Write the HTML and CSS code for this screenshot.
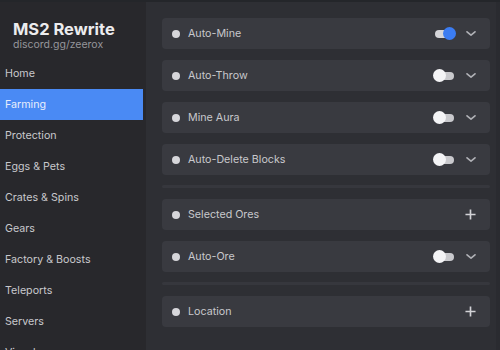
FILE: index.html
```html
<!DOCTYPE html>
<html lang="en">

<head>
    <meta charset="UTF-8">
    <meta name="viewport" content="width=device-width, initial-scale=1.0">
    <title>MS2 Rewrite</title>
    <link rel="stylesheet" href="styles.css">
</head>

<body>
    <div class="window">
        <aside class="sidebar">
            <div class="brand">
                <h1>MS2 Rewrite</h1>
                <p>discord.gg/zeerox</p>
            </div>
            <nav class="tabs">
                <div class="tab">Home</div>
                <div class="tab active">Farming</div>
                <div class="tab">Protection</div>
                <div class="tab">Eggs &amp; Pets</div>
                <div class="tab">Crates &amp; Spins</div>
                <div class="tab">Gears</div>
                <div class="tab">Factory &amp; Boosts</div>
                <div class="tab">Teleports</div>
                <div class="tab">Servers</div>
                <div class="tab">Visuals</div>
            </nav>
        </aside>

        <main class="content">
            <div class="row">
                <span class="dot"></span>
                <span class="label">Auto-Mine</span>
                <span class="toggle on"><span class="knob"></span></span>
                <svg class="chev" viewBox="0 0 10 5"><path d="M1 0.8 L5 4.2 L9 0.8" /></svg>
            </div>
            <div class="row">
                <span class="dot"></span>
                <span class="label">Auto-Throw</span>
                <span class="toggle"><span class="knob"></span></span>
                <svg class="chev" viewBox="0 0 10 5"><path d="M1 0.8 L5 4.2 L9 0.8" /></svg>
            </div>
            <div class="row">
                <span class="dot"></span>
                <span class="label">Mine Aura</span>
                <span class="toggle"><span class="knob"></span></span>
                <svg class="chev" viewBox="0 0 10 5"><path d="M1 0.8 L5 4.2 L9 0.8" /></svg>
            </div>
            <div class="row">
                <span class="dot"></span>
                <span class="label">Auto-Delete Blocks</span>
                <span class="toggle"><span class="knob"></span></span>
                <svg class="chev" viewBox="0 0 10 5"><path d="M1 0.8 L5 4.2 L9 0.8" /></svg>
            </div>
            <div class="divider"></div>
            <div class="row">
                <span class="dot"></span>
                <span class="label">Selected Ores</span>
                <svg class="plus" viewBox="0 0 12 12"><path d="M6 0.5 V11.5 M0.5 6 H11.5" /></svg>
            </div>
            <div class="row">
                <span class="dot"></span>
                <span class="label">Auto-Ore</span>
                <span class="toggle"><span class="knob"></span></span>
                <svg class="chev" viewBox="0 0 10 5"><path d="M1 0.8 L5 4.2 L9 0.8" /></svg>
            </div>
            <div class="divider"></div>
            <div class="row">
                <span class="dot"></span>
                <span class="label">Location</span>
                <svg class="plus" viewBox="0 0 12 12"><path d="M6 0.5 V11.5 M0.5 6 H11.5" /></svg>
            </div>
        </main>
        <div class="scrollbar"></div>
    </div>
</body>

</html>
```

FILE: styles.css
```css
:root {
    --sidebar: #28282c;
    --background: #2e2f34;
    --card: #393a40;
    --accent: #4a8af4;
    --text: #c8c8cc;
    --muted: #96969b;
}

html,
body {
    margin: 0;
    height: 100%;
    overflow: hidden;
}

body {
    background-color: var(--background);
    font-family: Inter, "Noto Sans", sans-serif;
    color: var(--text);
}

.window {
    display: flex;
    height: 350px;
    border-top: 2px solid #24262a;
    box-sizing: border-box;
}

.sidebar {
    width: 146px;
    flex: none;
    background-color: var(--sidebar);
}

.brand {
    padding: 17px 0 0 13px;
    height: 39px;
}

.brand h1 {
    margin: 0;
    font-size: 16.5px;
    font-weight: 700;
    line-height: 20px;
    color: #ececee;
}

.brand p {
    margin: 0;
    font-size: 10.5px;
    line-height: 12px;
    color: var(--muted);
}

.tabs {
    display: flex;
    flex-direction: column;
}

.tab {
    height: 31px;
    line-height: 31px;
    padding-left: 5px;
    margin-right: 3px;
    font-size: 10.7px;
}

.tab.active {
    background-color: var(--accent);
    color: #e8eefc;
}

.content {
    flex: 1;
    display: flex;
    flex-direction: column;
    gap: 11px;
    padding: 16px 6px 0 16px;
}

.row {
    display: flex;
    align-items: center;
    height: 31px;
    flex: none;
    padding: 0 14px 0 10px;
    background-color: var(--card);
    border-radius: 4px;
}

.dot {
    width: 8px;
    height: 8px;
    border-radius: 50%;
    background-color: #d6d6da;
}

.label {
    flex: 1;
    margin-left: 8px;
    font-size: 10.7px;
}

.toggle {
    position: relative;
    width: 19px;
    height: 8px;
    border-radius: 4px;
    background-color: #c9c9cd;
    margin-right: 12px;
}

.knob {
    position: absolute;
    top: -3px;
    left: -2px;
    width: 13px;
    height: 13px;
    border-radius: 50%;
    background-color: #f4f4f6;
}

.toggle.on {
    background-color: #d4d4d8;
}

.toggle.on .knob {
    left: 8px;
    background-color: #3b7cf2;
}

.chev {
    width: 10px;
    height: 5px;
    fill: none;
    stroke: #b0b1b6;
    stroke-width: 1.6;
    stroke-linecap: round;
    stroke-linejoin: round;
}

.plus {
    width: 11px;
    height: 11px;
    fill: none;
    stroke: #d2d2d6;
    stroke-width: 1.8;
}

.divider {
    height: 3px;
    flex: none;
    margin-top: -1px;
    border-radius: 2px;
    background-color: #36373d;
}

.scrollbar {
    width: 4px;
    flex: none;
    background-color: #2a2b30;
}
```
